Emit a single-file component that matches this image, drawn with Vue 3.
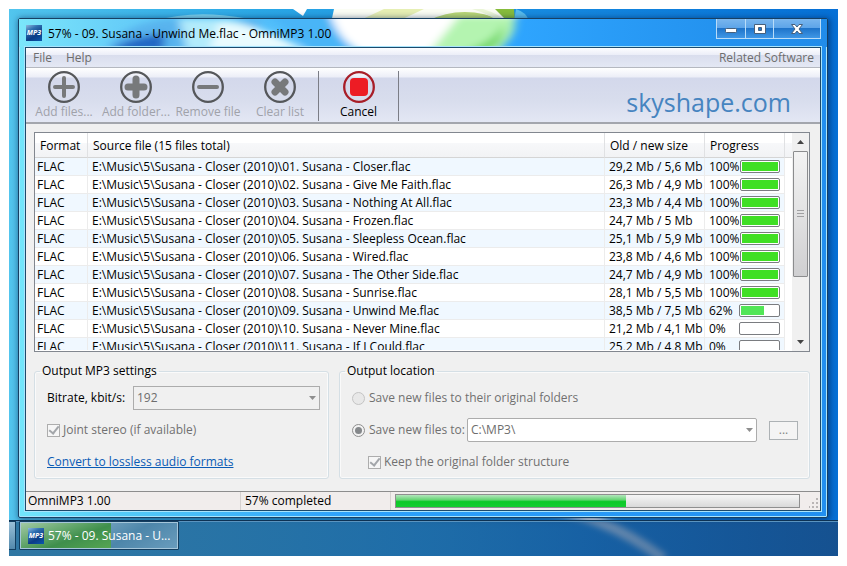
<script setup>
import { ref } from 'vue'

const names = [
  'Closer', 'Give Me Faith', 'Nothing At All', 'Frozen', 'Sleepless Ocean', 'Wired',
  'The Other Side', 'Sunrise', 'Unwind Me', 'Never Mine', 'If I Could'
]
const sizes = [
  '29,2 Mb / 5,6 Mb', '26,3 Mb / 4,9 Mb', '23,3 Mb / 4,4 Mb', '24,7 Mb / 5 Mb',
  '25,1 Mb / 5,9 Mb', '23,8 Mb / 4,6 Mb', '24,7 Mb / 4,9 Mb', '28,1 Mb / 5,5 Mb',
  '38,5 Mb / 7,5 Mb', '21,2 Mb / 4,1 Mb', '25,2 Mb / 4,8 Mb'
]
const done = [100, 100, 100, 100, 100, 100, 100, 100, 62, 0, 0]
const files = names.map((name, i) => ({
  path: `E:\\Music\\5\\Susana - Closer (2010)\\${String(i + 1).padStart(2, '0')}. Susana - ${name}.flac`,
  size: sizes[i],
  done: done[i]
}))

const total = 57
const target = ref('fixed')
const tools = [
  { label: 'Add files...', icon: 'add' },
  { label: 'Add folder...', icon: 'addFolder' },
  { label: 'Remove file', icon: 'remove' },
  { label: 'Clear list', icon: 'clear' }
]
const glyphs = {
  add: { d: 'M16 7V25M7 16H25', w: 4 },
  addFolder: { d: 'M16 8V24M8 16H24', w: 7 },
  remove: { d: 'M7 16H25', w: 4 },
  clear: { d: 'M11 11L21 21M21 11L11 21', w: 7 }
}
</script>

<template>
  <div class="page">
    <main class="desktop">
      <svg class="wallpaper" viewBox="0 0 829 547" preserveAspectRatio="none" aria-hidden="true">
        <defs>
          <linearGradient id="sky" x1="0" x2="1" y1="0" y2="0">
            <stop offset="0" stop-color="#52c5ee" />
            <stop offset=".3" stop-color="#2ba8e6" />
            <stop offset=".65" stop-color="#168ae0" />
            <stop offset="1" stop-color="#0670d6" />
          </linearGradient>
          <filter id="softArc"><feGaussianBlur stdDeviation="3" /></filter>
        </defs>
        <rect width="829" height="547" fill="url(#sky)" />
        <path d="M145 12Q185 0 235 9L240 16H140Z" fill="#7bd3ef" />
        <path d="M284 0H298L294 7Z" fill="#fff" />
        <path d="M325 0H500L495 14H322Z" fill="#fbfdf4" />
        <path d="M375 0H415L385 14H345Z" fill="#e6efb4" />
        <path d="M418 12Q455 -6 495 12Z" fill="#b8d775" />
        <path d="M486 0H505L506 12H498Z" fill="#86bc3c" />
        <path d="M463 0H474Q490 5 496 12H488Q480 5 463 0Z" fill="#eaf5d7" />
        <path d="M507 0Q517 3 520 12H505Z" fill="#58bcec" />
        <path d="M525 497Q590 502 655 550" fill="none" stroke="#fff" stroke-width="10" filter="url(#softArc)" />
      </svg>

      <section class="window">
        <svg class="glass" viewBox="0 0 808 28" preserveAspectRatio="none" aria-hidden="true">
          <defs>
            <linearGradient id="glassBase" x1="0" x2="1" y1="0" y2="0">
              <stop offset="0" stop-color="#7be6fb" />
              <stop offset=".12" stop-color="#68cff8" />
              <stop offset=".6" stop-color="#2fa6ff" />
              <stop offset=".88" stop-color="#2391ee" />
              <stop offset="1" stop-color="#218cea" />
            </linearGradient>
            <filter id="blurWide" x="-30%" y="-60%" width="160%" height="220%"><feGaussianBlur stdDeviation="5 3" /></filter>
          </defs>
          <rect width="808" height="28" fill="url(#glassBase)" />
          <g filter="url(#blurWide)">
            <path d="M88 32Q96 8 145 0H245L210 32Z" fill="#58b4ee" />
            <path d="M92 32Q102 20 145 14V32Z" fill="#2468c4" />
            <path d="M160 0H210Q245 10 290 32H168Z" fill="#b2ebfb" />
            <path d="M200 4Q245 6 285 32H190Z" fill="#e9fbfe" />
            <path d="M240 -8Q278 12 292 36H336Q318 14 312 -8Z" fill="#48b5f7" />
            <path d="M310 -8H500L478 36H346Q318 22 310 -8Z" fill="#fff" />
            <path d="M408 36L440 -3H495Q500 20 470 36Z" fill="#b4f4b0" />
            <path d="M440 34Q478 22 484 4Q486 26 466 34Z" fill="#74d86c" />
          </g>
        </svg>

        <header class="titlebar">
          <span class="app-icon">MP3</span>
          <h1>57% - 09. Susana - Unwind Me.flac - OmniMP3 1.00</h1>
          <div class="captions">
            <button type="button" aria-label="Minimize">
              <svg width="14" height="14" viewBox="0 0 14 14"><rect x="1.5" y="6.500" width="11" height="4" rx="1" fill="#fff" stroke="#47607c" /></svg>
            </button>
            <button type="button" aria-label="Maximize">
              <svg width="14" height="14" viewBox="0 0 14 14"><path d="M1.500 2.500H12.500V11.500H1.500ZM5.500 5.500V8.500H8.500V5.500Z" fill="#fff" fill-rule="evenodd" stroke="#47607c" /></svg>
            </button>
            <button type="button" class="close" aria-label="Close">
              <svg width="14" height="14" viewBox="0 0 14 14"><path d="M1.500 2.500H5L7 5L9 2.500H12.500L9 7L12.500 11.500H9L7 9L5 11.500H1.500L5 7Z" fill="#fff" stroke="#47607c" /></svg>
            </button>
          </div>
        </header>

        <div class="client">
          <nav class="menubar">
            <button type="button">File</button>
            <button type="button">Help</button>
            <button type="button" class="related">Related Software</button>
          </nav>

          <div class="toolbar">
            <button v-for="t in tools" :key="t.label" type="button" class="tool" disabled>
              <svg width="32" height="32" viewBox="0 0 32 32" aria-hidden="true">
                <circle cx="16" cy="16" r="14.800" fill="none" stroke="#55575a" stroke-width="2.300" />
                <path :d="glyphs[t.icon].d" fill="none" stroke="#77797b" stroke-linecap="round" :stroke-width="glyphs[t.icon].w" />
              </svg>
              {{ t.label }}
            </button>
            <span class="rule"></span>
            <button type="button" class="tool cancel">
              <svg width="32" height="32" viewBox="0 0 32 32" aria-hidden="true">
                <circle cx="16" cy="16" r="14.800" fill="none" stroke="#a81e28" stroke-width="2.300" />
                <rect x="7" y="7" width="18" height="18" rx="4" fill="#ed1c24" />
              </svg>
              Cancel
            </button>
            <span class="rule"></span>
            <a class="brand" href="#">skyshape.com</a>
          </div>

          <div class="body">
            <div class="list">
              <div class="viewport">
                <table>
                  <colgroup>
                    <col class="c-format" /><col /><col class="c-size" /><col class="c-progress" /><col class="c-rest" />
                  </colgroup>
                  <thead>
                    <tr>
                      <th>Format</th>
                      <th>Source file (15 files total)</th>
                      <th>Old / new size</th>
                      <th>Progress</th>
                      <td></td>
                    </tr>
                  </thead>
                  <tbody>
                    <tr v-for="f in files" :key="f.path">
                      <td>FLAC</td>
                      <td>{{ f.path }}</td>
                      <td>{{ f.size }}</td>
                      <td>
                        <div class="progress">
                          <span>{{ f.done }}%</span>
                          <div class="bar" role="progressbar" :aria-valuenow="f.done">
                            <div class="fill" :class="{ active: f.done < 100 }" :style="{ width: f.done + '%' }"></div>
                          </div>
                        </div>
                      </td>
                      <td></td>
                    </tr>
                  </tbody>
                </table>
              </div>
              <div class="scrollbar">
                <button type="button" aria-label="Scroll up">
                  <svg width="7" height="4" viewBox="0 0 7 4"><path d="M0 4L3.500 0L7 4Z" fill="#444" /></svg>
                </button>
                <div class="track"><div class="thumb"><i></i><i></i><i></i></div></div>
                <button type="button" aria-label="Scroll down">
                  <svg width="7" height="4" viewBox="0 0 7 4"><path d="M0 0L3.500 4L7 0Z" fill="#444" /></svg>
                </button>
              </div>
            </div>

            <div class="groups">
              <fieldset class="settings">
                <legend>Output MP3 settings</legend>
                <div class="line">
                  <label class="bitrate" for="bitrate">Bitrate, kbit/s:</label>
                  <div class="combo">
                    <select id="bitrate" disabled><option>192</option></select>
                    <svg width="7" height="4" viewBox="0 0 7 4" aria-hidden="true"><path d="M0 0L3.500 4L7 0Z" fill="#8e8e8e" /></svg>
                  </div>
                </div>
                <label class="line muted"><input type="checkbox" checked disabled />Joint stereo (if available)</label>
                <div class="line"><a href="#">Convert to lossless audio formats</a></div>
              </fieldset>

              <fieldset class="location">
                <legend>Output location</legend>
                <label class="line muted"><input v-model="target" type="radio" value="original" disabled />Save new files to their original folders</label>
                <div class="line">
                  <label class="muted choice"><input v-model="target" type="radio" value="fixed" disabled />Save new files to:</label>
                  <div class="combo path">
                    <select aria-label="Output folder" disabled><option>C:\MP3\</option></select>
                    <svg width="7" height="4" viewBox="0 0 7 4" aria-hidden="true"><path d="M0 0L3.500 4L7 0Z" fill="#8e8e8e" /></svg>
                  </div>
                  <button type="button" class="browse" disabled>...</button>
                </div>
                <label class="line muted nested"><input type="checkbox" checked disabled />Keep the original folder structure</label>
              </fieldset>
            </div>
          </div>

          <footer class="status">
            <span class="app">OmniMP3 1.00</span>
            <span class="state">57% completed</span>
            <div class="total" role="progressbar" :aria-valuenow="total"><div :style="{ width: total + '%' }"></div></div>
            <svg class="grip" width="10" height="10" viewBox="0 0 10 10" aria-hidden="true">
              <path d="M7 0h2v2h-2zM7 4h2v2h-2zM3 4h2v2h-2zM7 8h2v2h-2zM3 8h2v2h-2zM-1 8h2v2h-2z" fill="#b9b5b5" />
            </svg>
          </footer>
        </div>
      </section>

      <footer class="taskbar">
        <span class="edge"></span>
        <button type="button" class="task">
          <span class="task-fill" :style="{ width: total + '%' }"></span>
          <span class="app-icon">MP3</span>
          <span class="task-label">57% - 09. Susana - U...</span>
        </button>
      </footer>
    </main>
  </div>
</template>

<style>
body {
  margin: 0;
  background: #fff;
}
</style>

<style scoped>
* {
  box-sizing: border-box;
}
.page {
  display: flex;
  min-height: 100vh;
  padding: 9px 9px 10px;
  font: 12px/18px "Open Sans", "Noto Sans", sans-serif;
  color: #000;
}
.desktop {
  position: relative;
  display: flex;
  flex: 1;
  flex-direction: column;
  min-width: 0;
  overflow: hidden;
}
.wallpaper,
.glass {
  position: absolute;
  top: 0;
  left: 0;
  width: 100%;
  height: 100%;
}
.glass {
  height: 28px;
}
button {
  margin: 0;
  padding: 0;
  border: 0;
  background: none;
  font: inherit;
  color: inherit;
}

.window {
  position: relative;
  display: flex;
  flex: 1;
  flex-direction: column;
  margin: 9px 10px 2px 9px;
  padding: 0 6px 6px;
  border: 1px solid #173f63;
  border-radius: 2px;
  background: linear-gradient(90deg, #73e6fb 0, #55ccf8 12%, #2ea2fb 40%, #218ff0 100%);
  box-shadow: inset 0 0 0 1px #a8e4fc, 1px 1px 6px 1px rgba(0, 25, 70, 0.55);
}
.titlebar {
  position: relative;
  display: flex;
  align-items: flex-start;
  gap: 6px;
  height: 28px;
  padding-left: 1px;
}
.titlebar .app-icon {
  margin-top: 6px;
}
.titlebar h1 {
  flex: 1;
  margin: 6px 0 0;
  font-size: 12px;
  font-weight: 400;
  line-height: 18px;
  white-space: nowrap;
}
.app-icon {
  position: relative;
  display: grid;
  place-items: center;
  flex: none;
  width: 16px;
  height: 16px;
  background: linear-gradient(150deg, #8fb8de 0, #2f6fb0 30%, #0b3c86 65%, #0a58ae 100%);
  font: italic 700 7px/16px "Open Sans", sans-serif;
  color: #fff;
}
.captions {
  display: flex;
  height: 20px;
  border: 1px solid #b9dcf8;
  border-top: 0;
  background: linear-gradient(#79b6ee 0, #5ea5e9 45%, #1f74ca 50%, #3f97e6 100%);
}
.captions button {
  display: grid;
  place-items: center;
  width: 28px;
  border-left: 1px solid #b9dcf8;
}
.captions button:first-child {
  border-left: 0;
}
.captions .close {
  width: 47px;
}

.client {
  position: relative;
  display: flex;
  flex: 1;
  flex-direction: column;
  border: 1px solid #1c4a6c;
  background: #f0f0f0;
  box-shadow: 0 0 0 1px #a8e4fc;
}
.menubar {
  display: flex;
  gap: 14px;
  height: 20px;
  padding: 0 6px 0 7px;
  border-bottom: 1px solid #b5b8c0;
  background: linear-gradient(#fdfdff 0, #eceef8 35%, #d9dded 36%, #e4e8f4 100%);
  color: #6d6d6d;
}
.related {
  margin-left: auto;
}
.toolbar {
  display: flex;
  align-items: flex-start;
  height: 56px;
  padding: 3px 29px 0 2px;
  border-bottom: 2px solid #a3a6ad;
  background: linear-gradient(#fff 0, #eceef7 9px, #d3d8eb 10px, #d8dded 60%, #e3e7f4 100%);
}
.tool {
  display: flex;
  flex-direction: column;
  align-items: center;
  width: 72px;
  color: #a0a2aa;
  white-space: nowrap;
}
.tool svg {
  display: block;
}
.tool.cancel {
  width: 79px;
  color: #000;
}
.rule {
  width: 1px;
  height: 50px;
  background: #7b7d86;
}
.rule:first-of-type {
  margin-left: 2px;
}
.brand {
  margin: 13px 0 0 auto;
  font-size: 25px;
  line-height: 36px;
  color: #4684c0;
  text-decoration: none;
}

.body {
  display: flex;
  flex: 1;
  flex-direction: column;
  padding: 8px 10px 12px 8px;
}
.list {
  display: flex;
  flex: 1 0 219px;
  height: 219px;
  border: 1px solid #82878f;
  background: #fff;
}
.viewport {
  flex: 1;
  height: 217px;
  overflow-x: hidden;
  overflow-y: auto;
  scrollbar-width: none;
}
table {
  width: 100%;
  border-collapse: separate;
  border-spacing: 0;
  table-layout: fixed;
}
.c-format {
  width: 53px;
}
.c-size {
  width: 100px;
}
.c-progress {
  width: 80px;
}
.c-rest {
  width: 7px;
}
th,
td {
  padding: 0;
  text-align: left;
  font-weight: 400;
  white-space: nowrap;
}
thead tr > * {
  height: 25px;
  padding: 2px 0 0 5px;
  border-right: 1px solid #e0e1e3;
  border-bottom: 1px solid #d5d5d5;
  background: linear-gradient(#fff 0, #fff 40%, #f7f8fa 41%, #f2f3f5 100%);
}
thead tr > td {
  padding: 0;
  border-right: 0;
}
tbody td {
  height: 18px;
  padding-left: 4px;
  border-right: 1px solid #ececec;
  border-bottom: 1px solid #ececec;
  line-height: 17px;
}
tbody td:first-child {
  padding-left: 2px;
}
tbody td:last-child {
  padding: 0;
  border: 0;
}
tbody tr:nth-child(odd) td:not(:last-child) {
  background: #f0f8ff;
}
.progress {
  display: flex;
  align-items: center;
  justify-content: space-between;
  padding-right: 4px;
}
.bar {
  width: 41px;
  height: 13px;
  padding: 1px;
  border: 1px solid #7a7c80;
  border-radius: 2px;
  background: #fff;
}
.fill {
  height: 100%;
  background: #3fdf24;
}
.fill.active {
  background: #51e657;
}
.scrollbar {
  display: flex;
  flex-direction: column;
  width: 17px;
  padding: 0 1px;
  background: #f0f0f0;
}
.scrollbar button {
  display: grid;
  place-items: center;
  height: 18px;
}
.track {
  flex: 1;
}
.thumb {
  display: flex;
  flex-direction: column;
  align-items: center;
  justify-content: center;
  gap: 2px;
  height: 69%;
  border: 1px solid #8b8c8e;
  border-radius: 1px;
  background: linear-gradient(#f3f3f3, #e2e2e3 50%, #cfcfd1);
}
.thumb i {
  width: 7px;
  height: 1px;
  background: #a0a0a2;
}

.groups {
  display: grid;
  grid-template-columns: 295fr 471fr;
  gap: 10px;
  margin-top: 10px;
}
fieldset {
  min-width: 0;
  margin: 0;
  padding: 6px 8px 4px 12px;
  border: 1px solid #d5dfe5;
  border-radius: 3px;
  box-shadow: inset 0 0 0 1px #fafafa;
}
legend {
  margin-left: -7px;
  padding: 0 2px;
}
.location {
  padding-right: 10px;
}
.line {
  display: flex;
  align-items: center;
  height: 24px;
  margin-bottom: 8px;
}
.line:last-child {
  margin-bottom: 0;
}
.muted {
  color: #707070;
}
.bitrate {
  width: 86px;
  white-space: nowrap;
}
.combo {
  position: relative;
  flex: 1;
}
.combo select {
  display: block;
  width: 100%;
  height: 24px;
  padding: 0 3px;
  border: 1px solid #acacac;
  border-radius: 0;
  background: #f0f0f0;
  appearance: none;
  font: inherit;
  color: #6d6d6d;
  opacity: 1;
}
.combo.path select {
  border-radius: 2px;
  background: #fff;
}
.combo svg {
  position: absolute;
  top: 10px;
  right: 4px;
}
input {
  flex: none;
  display: grid;
  place-items: center;
  width: 13px;
  height: 13px;
  margin: 0 3px 0 0;
  border: 1px solid #adadad;
  background: #f6f6f6;
  appearance: none;
}
input[type="checkbox"]:checked::after {
  content: "";
  width: 4px;
  height: 8px;
  margin-top: -2px;
  border: solid #a3a6aa;
  border-width: 0 2px 2px 0;
  transform: rotate(38deg);
}
input[type="radio"] {
  margin-right: 4px;
  border-color: #c4c4c4;
  border-radius: 50%;
  background: #e8e8e8;
}
input[type="radio"]:checked {
  border-color: #8f8f8f;
  background: #f2f2f2;
}
input[type="radio"]:checked::after {
  content: "";
  width: 7px;
  height: 7px;
  border-radius: 50%;
  background: #85888b;
}
.choice {
  display: flex;
  align-items: center;
  width: 115px;
  white-space: nowrap;
}
.browse {
  width: 29px;
  height: 19px;
  margin: 0 1px 0 12px;
  border: 1px solid #adb2b5;
  background: #f4f4f4;
  line-height: 16px;
  color: #838383;
}
.nested {
  padding-left: 16px;
}
.settings a {
  color: #0a5bb5;
}

.status {
  display: flex;
  height: 19px;
  border-top: 1px solid #8d8d8d;
  background: #f1edec;
}
.status span {
  border-right: 1px solid #d5d1d0;
}
.app {
  width: 215px;
  padding-left: 2px;
}
.state {
  width: 150px;
  padding-left: 4px;
}
.total {
  flex: 1;
  height: 14px;
  margin: 2px 9px 0 4px;
  border: 1px solid #8f8f8f;
  background: linear-gradient(#f5f5f5, #e9e9e9 45%, #d9d9d9);
}
.total div {
  height: 100%;
  background: linear-gradient(#b4e6bd 0, #66d574 40%, #0cc928 55%, #14cd30 100%);
}
.grip {
  align-self: flex-end;
  margin: 0 1px 2px 0;
}

.taskbar {
  position: relative;
  display: flex;
  gap: 3px;
  height: 36px;
  border-top: 1px solid #0d3254;
  background: linear-gradient(90deg, rgba(46, 116, 160, 0.97), rgba(30, 98, 154, 0.8) 50%, rgba(24, 76, 132, 0.65) 70%, rgba(24, 76, 132, 0.85));
  box-shadow: inset 0 1px 0 #5b94bf;
}
.edge {
  width: 7px;
  height: 29px;
  border: 1px solid #123e60;
  border-left: 0;
  background: linear-gradient(#9ac0d8, #5289ac);
}
.task {
  position: relative;
  display: flex;
  align-items: center;
  gap: 4px;
  width: 160px;
  height: 29px;
  padding: 0 8px;
  border: 1px solid #123e60;
  border-radius: 1px;
  background: linear-gradient(150deg, #b4cfdf 0, #7ba9c4 35%, #4d86aa 65%, #6a9dbd 100%);
  box-shadow: inset 0 0 0 1px #a5c6da;
  color: #fff;
}
.task-fill {
  position: absolute;
  top: 1px;
  bottom: 1px;
  left: 1px;
  background: linear-gradient(160deg, #a2c9a4 0, #5fa469 40%, #3f8f4c 60%, #56a552 100%);
}
.task-label {
  position: relative;
  white-space: nowrap;
}
</style>
